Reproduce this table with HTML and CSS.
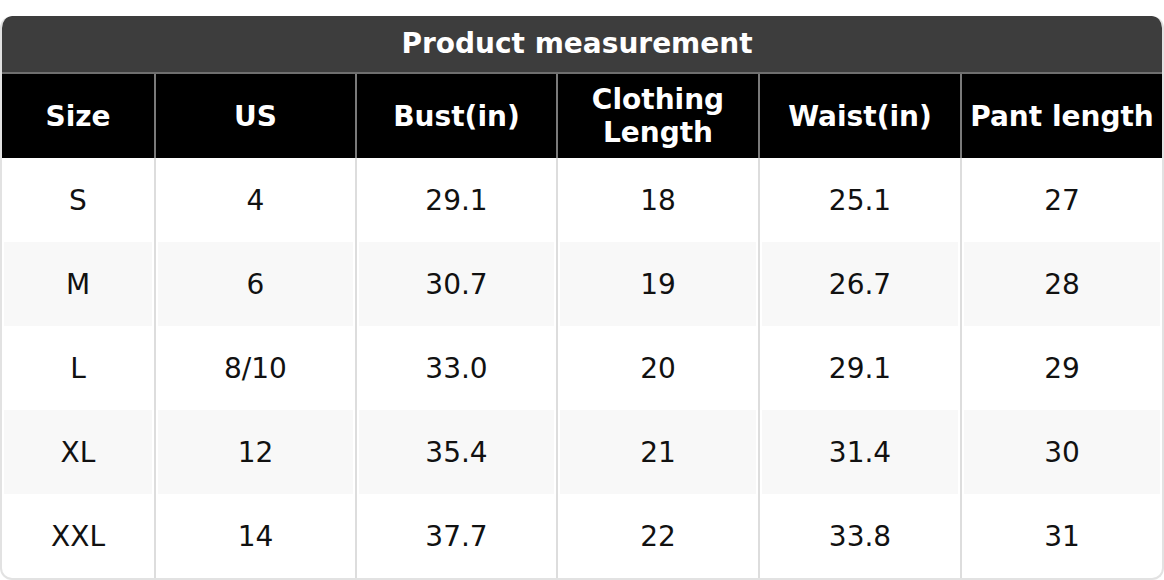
FILE: index.html
```html
<!DOCTYPE html>
<html>
<head>
<meta charset="utf-8">
<link rel="stylesheet" href="styles.css">
</head>
<body>
<div class="sheet">
  <div class="title">Product measurement</div>
  <table class="sizes">
    <colgroup>
      <col class="c1"><col class="c2"><col class="c3"><col class="c4"><col class="c5"><col class="c6">
    </colgroup>
    <thead>
      <tr>
        <th>Size</th><th>US</th><th>Bust(in)</th><th>Clothing<br>Length</th><th>Waist(in)</th><th>Pant length</th>
      </tr>
    </thead>
    <tbody>
      <tr><td>S</td><td>4</td><td>29.1</td><td>18</td><td>25.1</td><td>27</td></tr>
      <tr class="alt"><td>M</td><td>6</td><td>30.7</td><td>19</td><td>26.7</td><td>28</td></tr>
      <tr><td>L</td><td>8/10</td><td>33.0</td><td>20</td><td>29.1</td><td>29</td></tr>
      <tr class="alt"><td>XL</td><td>12</td><td>35.4</td><td>21</td><td>31.4</td><td>30</td></tr>
      <tr><td>XXL</td><td>14</td><td>37.7</td><td>22</td><td>33.8</td><td>31</td></tr>
    </tbody>
  </table>
</div>
</body>
</html>
```
FILE: styles.css
```css
html, body {
  margin: 0;
  padding: 0;
  background: #ffffff;
}
body {
  padding-top: 16px;
  font-family: "DejaVu Sans", sans-serif;
}
.sheet {
  width: 1164px;
  box-sizing: border-box;
  border: 2px solid #e2e2e2;
  border-top: none;
  border-radius: 12px;
  overflow: hidden;
}
.title {
  height: 56px;
  margin: 0 -2px;
  padding-right: 10px;
  background: #3d3d3d;
  color: #ffffff;
  font-weight: bold;
  font-size: 28px;
  line-height: 56px;
  text-align: center;
  border-bottom: 2px solid #6f6f6f;
  border-radius: 12px 12px 0 0;
}
.sizes {
  width: 100%;
  border-collapse: collapse;
  table-layout: fixed;
}
.c1 { width: 153px; }
.c2 { width: 201px; }
.c3 { width: 201px; }
.c4 { width: 202px; }
.c5 { width: 202px; }
.c6 { width: auto; }
.sizes th {
  background: #000000;
  color: #ffffff;
  font-weight: bold;
  font-size: 28px;
  line-height: 33px;
  height: 84px;
  padding: 0;
  text-align: center;
  border-left: 2px solid #7a7a7a;
  white-space: nowrap;
}
.sizes th:first-child,
.sizes td:first-child {
  border-left: none;
}
.sizes td {
  height: 84px;
  padding: 0;
  font-size: 28px;
  color: #111111;
  text-align: center;
  border-left: 2px solid #dddddd;
}
.sizes tr.alt td {
  background: #f8f8f8;
  box-shadow: inset 2px 0 #ffffff, inset -2px 0 #ffffff;
}
```
